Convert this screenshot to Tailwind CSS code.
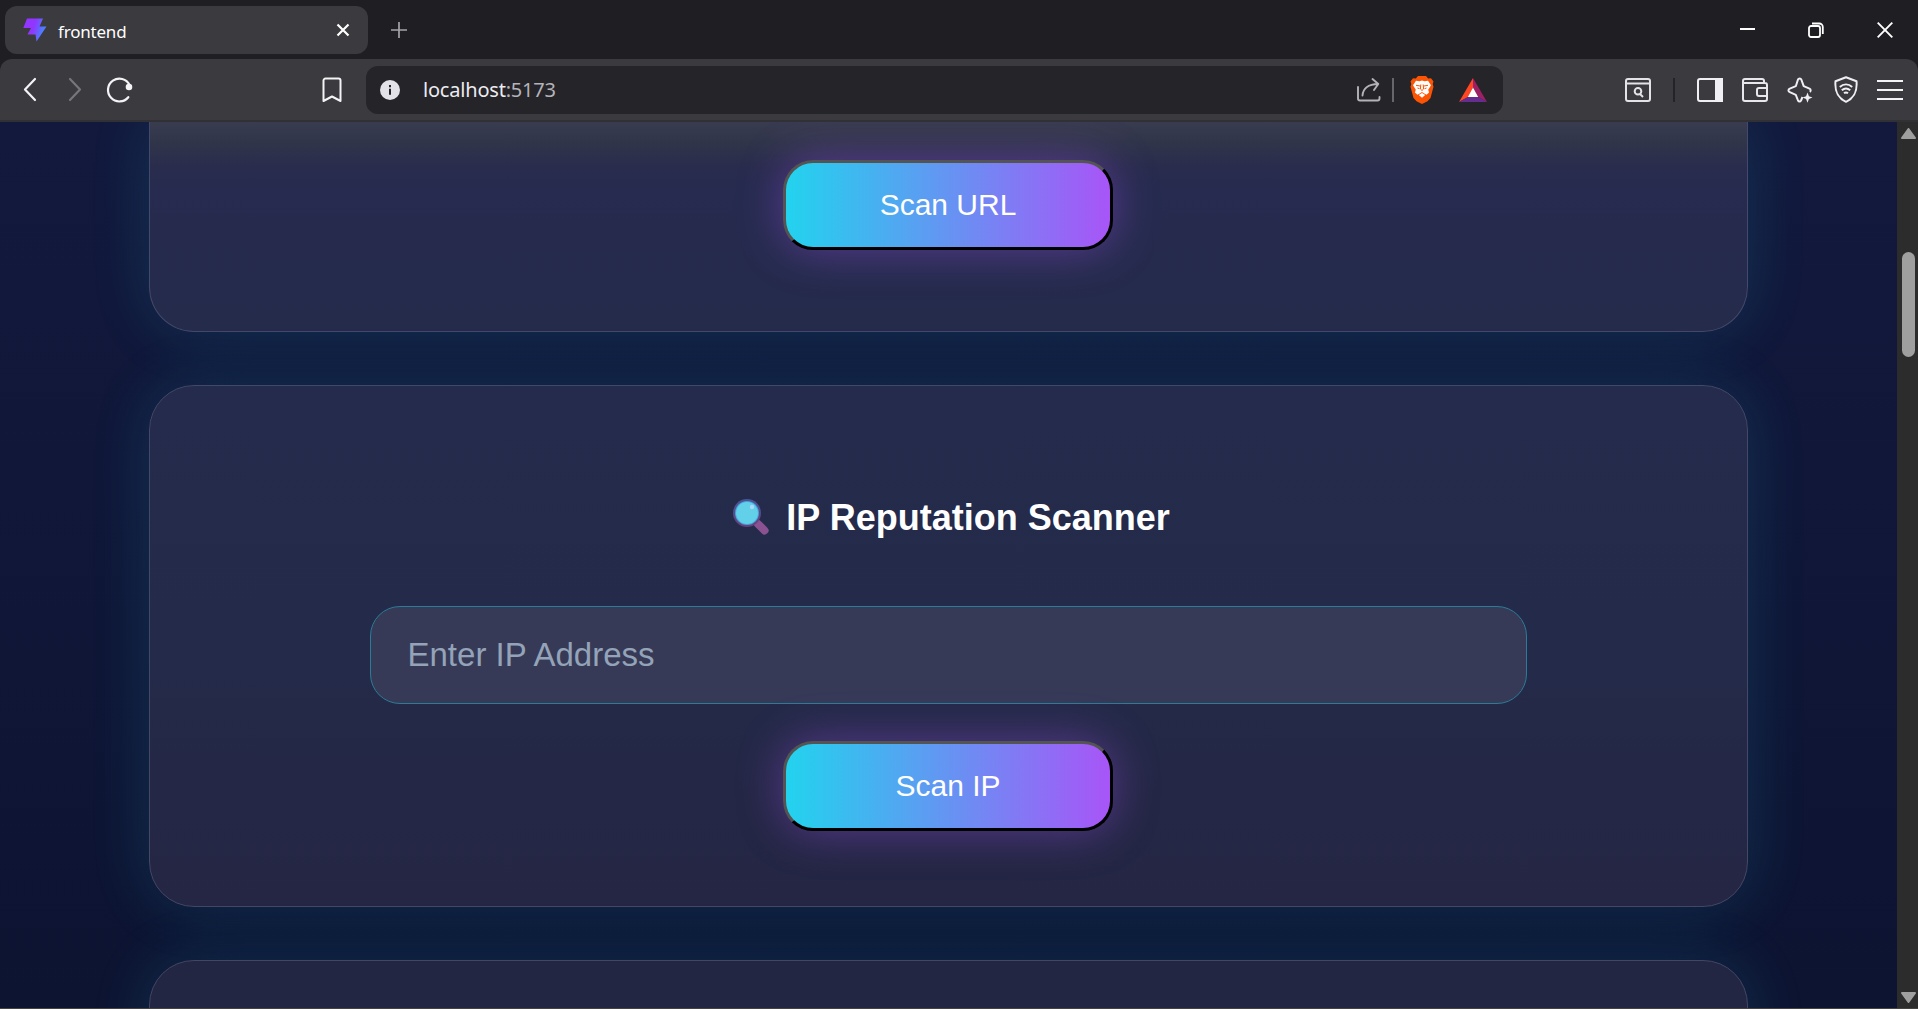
<!DOCTYPE html>
<html lang="en">
<head>
  <meta charset="UTF-8">
  <title>frontend</title>
  <script src="https://cdn.jsdelivr.net/npm/@tailwindcss/browser@4"></script>
</head>
<body class="w-[1918px] h-[1009px] overflow-hidden flex flex-col bg-[#1f1e23] font-['Noto_Sans',sans-serif]">

  <!-- Tab strip -->
  <header class="h-[59px] shrink-0 flex items-center justify-between text-white">
    <div class="flex items-center">
      <div class="ml-[5px] w-[363px] h-12 mt-px rounded-xl bg-[#3b3a3e] flex items-center pl-[18px] pr-[19px]">
        <svg class="w-6 h-6" viewBox="0 0 24 24">
          <defs>
            <linearGradient id="bolt" x1="0" y1="0.2" x2="1" y2="0.5">
              <stop offset="0.45" stop-color="#9135ff"/>
              <stop offset="0.85" stop-color="#4d7dff"/>
            </linearGradient>
          </defs>
          <path d="M4 .5h16l-3.500 8h7L13.500 23.500l-1-7H4.500L8 10H.3z" fill="url(#bolt)"/>
        </svg>
        <span class="ml-[11px] pt-[3px] text-[17px] leading-6 tracking-[-0.2px]">frontend</span>
        <svg class="ml-auto w-3 h-3 overflow-visible" viewBox="0 0 12 12" fill="none" stroke="white" stroke-width="2.200"><path d="M.5.5l11 11M11.500.5l-11 11"/></svg>
      </div>
      <svg class="ml-[23px] w-4 h-4" viewBox="0 0 16 16" stroke="#a5a4a8" stroke-width="1.700"><path d="M8 0v16M0 8h16"/></svg>
    </div>
    <div class="flex items-center pr-[25px]">
      <svg class="w-[15px] h-4" viewBox="0 0 15 16" stroke="white" stroke-width="2"><path d="M0 7h15"/></svg>
      <svg class="ml-[53px] w-4 h-4" viewBox="0 0 16 16" fill="none" stroke="white" stroke-width="1.800"><rect x="1" y="4" width="11" height="11" rx="2"/><path d="M4 1.500h7a3.500 3.500 0 0 1 3.800 3.500v7"/></svg>
      <svg class="ml-[53px] w-4 h-4" viewBox="0 0 16 16" stroke="white" stroke-width="1.900"><path d="M.7.7l14.600 14.600M15.300.7L.7 15.300"/></svg>
    </div>
  </header>

  <!-- Toolbar -->
  <nav class="h-[63px] shrink-0 rounded-t-xl bg-[#3b3a3e] border-b-2 border-[#313034] flex items-center pl-6">
    <svg class="w-3 h-[23px] overflow-visible" viewBox="0 0 12 23" fill="none" stroke="#f4f4f6" stroke-width="2.200" stroke-linecap="round" stroke-linejoin="round"><path d="M11 1L1 11.500 11 22"/></svg>
    <svg class="ml-[33px] w-3 h-[23px] overflow-visible" viewBox="0 0 12 23" fill="none" stroke="#77767a" stroke-width="2.200" stroke-linecap="round" stroke-linejoin="round"><path d="M1 1l10 10.500L1 22"/></svg>
    <svg class="ml-[26px] w-[26px] h-[25px] overflow-visible" viewBox="0 0 26 25" fill="none" stroke="#f4f4f6" stroke-width="2.200" stroke-linecap="round"><path d="M21.300 20.200A11.400 11.400 0 1 1 22.600 8"/><circle cx="22" cy="10" r="2.200" fill="#f4f4f6"/></svg>
    <svg class="ml-[189px] w-5 h-[26px]" viewBox="0 0 20 26" fill="none" stroke="#f4f4f6" stroke-width="2" stroke-linejoin="round"><path d="M1.500 3.500a2 2 0 0 1 2-2h13a2 2 0 0 1 2 2v20.500L10 19.500 1.500 24z"/></svg>

    <div class="ml-6 w-[1137px] h-12 rounded-xl bg-[#252429] flex items-center pl-[14px]">
      <svg class="w-5 h-5" viewBox="0 0 20 20"><circle cx="10" cy="10" r="10" fill="#e3e2e8"/><path d="M10 8.800v6M10 5v2.300" stroke="#252429" stroke-width="2"/></svg>
      <span class="ml-[23px] pt-px text-[20px] leading-7 tracking-[-0.2px] text-[#ececf0]">localhost<span class="text-[#b4b3b9]">:5173</span></span>
      <svg class="ml-auto w-6 h-6 overflow-visible" viewBox="0 0 24 24" fill="none" stroke="#b4b3b8" stroke-width="1.900" stroke-linecap="round" stroke-linejoin="round"><path d="M1 9v11.500a2 2 0 0 0 2 2h17.500a2 2 0 0 0 2-2v-1.500M5.500 17.500C6 11 11 6 21 6M15.500 1l5.800 5-4.300 6"/></svg>
      <div class="ml-[11px] w-[2px] h-6 bg-[#67666b]"></div>
      <!-- Shields -->
      <svg class="ml-4 w-6 h-7" viewBox="0 0 24 28">
        <path d="M8 0h8l2.200 2.500L21 2.200l2.500 3.300-.8 2.500.8 2.800-3 11.200-3 3.300L12 28l-5.500-2.700-3-3.300L.5 10.800l.8-2.800L.5 5.500 3 2.200l2.800.3z" fill="#fb5404"/>
        <path d="M6 4.700l3.500.6 2.500-.7 2.500.7 3.500-.6 3 4.500-2.800 4.500.9 2.800-2.600 2.300-2.700-1.600L12 16l-1.800 1.200-2.700 1.600-2.600-2.300.9-2.800L3 9.200z" fill="white"/>
        <path d="M12 17l3.200 2L12 21.800 8.800 19z" fill="white"/>
        <path d="M6 9.300l4.500.8M18 9.300l-4.500.8M10.800 8.500l-.4 4.500 1.600 1.500 1.600-1.500-.4-4.500M7.500 12l2 .7M16.500 12l-2 .7" fill="none" stroke="#fb5404" stroke-width="1"/>
      </svg>
      <svg class="ml-[25px] mr-4 w-7 h-6" viewBox="0 0 28 24">
        <path d="M14 0v9.500L9 19 0 24z" fill="#ff4724"/>
        <path d="M14 0l14 24-9-5-5-9.500z" fill="#9e1f63"/>
        <path d="M0 24l9-5h10l9 5z" fill="#662d91"/>
        <path d="M14 9.500L19.200 19H8.800z" fill="white"/>
      </svg>
    </div>

    <svg class="ml-[122px] w-[26px] h-6" viewBox="0 0 26 24" fill="none" stroke="#e4e3e8" stroke-width="2"><rect x="1" y="1" width="24" height="22" rx="2"/><path d="M1 5.500h24"/><circle cx="13" cy="13.200" r="3.300"/><path d="M15 16l3 3"/></svg>
    <div class="ml-[22px] w-[2px] h-6 bg-[#242327]"></div>
    <svg class="ml-[22px] w-[26px] h-6" viewBox="0 0 26 24" fill="none" stroke="#f0eff4" stroke-width="2"><rect x="1" y="1" width="24" height="22" rx="2"/><path d="M19 1H25v22h-6z" fill="#f0eff4"/></svg>
    <svg class="ml-[19px] w-[26px] h-6" viewBox="0 0 26 24" fill="none" stroke="#e8e7ec" stroke-width="2" stroke-linejoin="round"><path d="M25 10V7a2 2 0 0 0-2-2H1M22 5V3a2 2 0 0 0-2-2H3a2 2 0 0 0-2 2v18a2 2 0 0 0 2 2h20a2 2 0 0 0 2-2v-3M25 10h-8a2 2 0 0 0-2 2v4a2 2 0 0 0 2 2h8z"/></svg>
    <svg class="ml-[19px] w-[26px] h-[26px]" viewBox="0 0 26 26" fill="none" stroke="#f0eff4" stroke-width="2" stroke-linejoin="round"><path d="M15.500 20l-1.500 3.500c-.7 1.300-2.300 1.300-3 0l-2.200-5.700-6-2.600c-1.800-.8-1.800-2.700 0-3.500l6-2.500L11 2.500c.7-1.500 2.700-1.500 3.300 0l2.400 6.700 5.800 2.500c1.500.8 1.500 2.300.3 3.200"/><path d="M20.500 15.500l1.400 3.700 3.600 1.400-3.600 1.400-1.400 3.700-1.400-3.700-3.600-1.400 3.600-1.400z" fill="#f0eff4" stroke="none"/></svg>
    <svg class="ml-[21px] w-6 h-[27px]" viewBox="0 0 24 27" fill="none" stroke="#f0eff4" stroke-width="2" stroke-linejoin="round"><path d="M12 1.200l10.500 4c.8 9-1 16-10.500 20.600C2.500 21.200.7 14.200 1.500 5.200z"/><path d="M5.800 11c3.700-3.200 8.700-3.200 12.400 0M7.800 14.300c2.500-2.200 5.900-2.200 8.400 0M10 17.300c1.300-1 2.700-1 4 0"/></svg>
    <svg class="ml-[19px] w-[26px] h-5" viewBox="0 0 26 20" stroke="#f4f4f6" stroke-width="2"><path d="M0 1h26M0 10h26M0 19h26"/></svg>
  </nav>

  <!-- Page -->
  <div class="h-[886px] shrink-0 flex">
    <main class="w-[1897px] overflow-hidden flex flex-col items-center gap-[53px] pr-px bg-linear-to-b/srgb from-[#12193d] to-[#0d1432] font-['Liberation_Sans',Arial,sans-serif]">

      <section class="w-[1599px] h-[210px] shrink-0 rounded-b-[45px] border border-t-0 border-[#444869] bg-[linear-gradient(to_bottom,#393c4f_0px,#30354a_20px,#292c4d_45px,#262b4f_70px,#252b4b_210px)] shadow-[0_0_60px_rgba(34,211,238,0.15)] flex flex-col items-center pt-[38px]">
        <button class="w-[330px] h-[90px] rounded-[30px] border-3 [border-style:outset] border-black bg-linear-to-r/srgb from-[#22d3ee] to-[#a855f7] shadow-[0_0_45px_rgba(168,85,247,0.4)] text-white text-[30px] pb-[2px]">Scan URL</button>
      </section>

      <section class="w-[1599px] h-[522px] shrink-0 rounded-[45px] border border-[#444765] bg-[linear-gradient(to_bottom,#252b4c,#242a49_55%,#242745_80%,#242644)] shadow-[0_0_60px_rgba(34,211,238,0.15)] flex flex-col items-center pt-[104px]">
        <h2 class="h-[54px] pl-[7px] flex items-center gap-[17px] text-white text-[36px] font-bold">
          <svg class="w-9 h-9" viewBox="0 0 36 36">
            <defs>
              <linearGradient id="ring" x1="0" y1="0" x2="0" y2="1">
                <stop offset="0" stop-color="#4a5596"/>
                <stop offset="1" stop-color="#6b3f7c"/>
              </linearGradient>
            </defs>
            <path d="M25 25l6.500 6.500" stroke="#8a5290" stroke-width="8" stroke-linecap="round"/>
            <circle cx="14" cy="14" r="14" fill="url(#ring)"/>
            <circle cx="14" cy="14" r="12" fill="#3fa9dc"/>
            <circle cx="14" cy="14" r="11" fill="#63d0ea"/>
            <circle cx="19" cy="8" r="2.200" fill="#a9d8f8"/>
          </svg>
          <span class="pt-[2px]">IP Reputation Scanner</span>
        </h2>
        <input type="text" placeholder="Enter IP Address" class="mt-[62px] w-[1157px] h-[98px] shrink-0 rounded-[30px] border border-[#2b7c96] bg-[#363a57] px-[37px] text-[33px] text-white placeholder:text-[#94a3b8]">
        <button class="mt-[37px] w-[330px] h-[90px] shrink-0 rounded-[30px] border-3 [border-style:outset] border-black bg-linear-to-r/srgb from-[#22d3ee] to-[#a855f7] shadow-[0_0_45px_rgba(168,85,247,0.4)] text-white text-[30px] pb-[2px]">Scan IP</button>
      </section>

      <section class="w-[1599px] h-[300px] shrink-0 rounded-[45px] border border-[#434561] bg-[#232643] shadow-[0_0_60px_rgba(34,211,238,0.15)]"></section>
    </main>

    <!-- Scrollbar -->
    <aside class="w-[21px] bg-[#2c2c2c] flex flex-col items-center pl-[2px] pt-[6px] pb-[5px]">
      <svg class="w-[15px] h-[11px]" viewBox="0 0 15 11" fill="#9f9f9f" stroke="#9f9f9f" stroke-width="2" stroke-linejoin="round"><path d="M7.500 1L14 10H1z"/></svg>
      <div class="mt-[113px] w-[13px] h-[105px] rounded-full bg-[#9f9f9f]"></div>
      <svg class="mt-auto w-[15px] h-[11px]" viewBox="0 0 15 11" fill="#9f9f9f" stroke="#9f9f9f" stroke-width="2" stroke-linejoin="round"><path d="M7.500 10L14 1H1z"/></svg>
    </aside>
  </div>
  <div class="h-px shrink-0 bg-[#454443]"></div>
</body>
</html>
